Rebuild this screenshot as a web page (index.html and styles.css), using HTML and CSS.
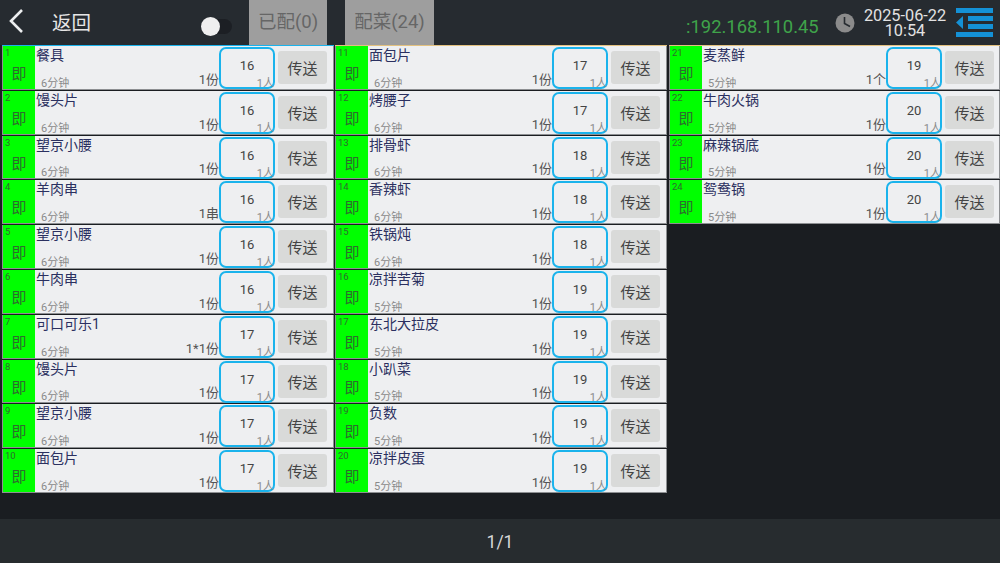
FILE: index.html
```html
<!DOCTYPE html>
<html lang="zh-CN">
<head>
    <meta charset="UTF-8">
    <title>配菜</title>
    <link rel="stylesheet" href="styles.css">
</head>
<body>
    <header class="topbar">
        <svg class="back-icon" width="16" height="26" viewBox="0 0 16 26"><path d="M14 2 L3 13 L14 24" fill="none" stroke="#eceeef" stroke-width="2.6"/></svg>
        <span class="back-text">返回</span>
        <div class="toggle"><span class="toggle-knob"></span></div>
        <div class="tab tab-done">已配(0)</div>
        <div class="tab tab-todo">配菜(24)</div>
        <span class="ip">:192.168.110.45</span>
        <svg class="clock-icon" width="20" height="20" viewBox="0 0 20 20"><circle cx="10" cy="10" r="9.5" fill="#8b8b8b"/><path d="M9.5 4 V10.5 L15 13.5" fill="none" stroke="#262b30" stroke-width="1.6"/></svg>
        <div class="datetime"><div>2025-06-22</div><div>10:54</div></div>
        <svg class="menu-icon" width="37" height="29" viewBox="0 0 37 29"><g fill="#1491d6"><rect x="0" y="0" width="37" height="5"/><rect x="12" y="8" width="25" height="5"/><rect x="12" y="16" width="25" height="5"/><rect x="0" y="24" width="37" height="5"/><path d="M7 8 V21 L0 14.5 Z"/></g></svg>
    </header>

    <main class="board">
        <div class="card first-blue"><div class="tag"><span class="no">1</span><span class="now">即</span></div><div class="info"><div class="name">餐具</div><div class="meta"><span class="mins">6分钟</span><span class="qty">1份</span></div></div><div class="count"><span class="num">16</span><span class="people">1人</span></div><div class="send"><span>传送</span></div></div>
        <div class="card"><div class="tag"><span class="no">2</span><span class="now">即</span></div><div class="info"><div class="name">馒头片</div><div class="meta"><span class="mins">6分钟</span><span class="qty">1份</span></div></div><div class="count"><span class="num">16</span><span class="people">1人</span></div><div class="send"><span>传送</span></div></div>
        <div class="card"><div class="tag"><span class="no">3</span><span class="now">即</span></div><div class="info"><div class="name">望京小腰</div><div class="meta"><span class="mins">6分钟</span><span class="qty">1份</span></div></div><div class="count"><span class="num">16</span><span class="people">1人</span></div><div class="send"><span>传送</span></div></div>
        <div class="card"><div class="tag"><span class="no">4</span><span class="now">即</span></div><div class="info"><div class="name">羊肉串</div><div class="meta"><span class="mins">6分钟</span><span class="qty">1串</span></div></div><div class="count"><span class="num">16</span><span class="people">1人</span></div><div class="send"><span>传送</span></div></div>
        <div class="card"><div class="tag"><span class="no">5</span><span class="now">即</span></div><div class="info"><div class="name">望京小腰</div><div class="meta"><span class="mins">6分钟</span><span class="qty">1份</span></div></div><div class="count"><span class="num">16</span><span class="people">1人</span></div><div class="send"><span>传送</span></div></div>
        <div class="card"><div class="tag"><span class="no">6</span><span class="now">即</span></div><div class="info"><div class="name">牛肉串</div><div class="meta"><span class="mins">6分钟</span><span class="qty">1份</span></div></div><div class="count"><span class="num">16</span><span class="people">1人</span></div><div class="send"><span>传送</span></div></div>
        <div class="card"><div class="tag"><span class="no">7</span><span class="now">即</span></div><div class="info"><div class="name">可口可乐1</div><div class="meta"><span class="mins">6分钟</span><span class="qty">1*1份</span></div></div><div class="count"><span class="num">17</span><span class="people">1人</span></div><div class="send"><span>传送</span></div></div>
        <div class="card"><div class="tag"><span class="no">8</span><span class="now">即</span></div><div class="info"><div class="name">馒头片</div><div class="meta"><span class="mins">6分钟</span><span class="qty">1份</span></div></div><div class="count"><span class="num">17</span><span class="people">1人</span></div><div class="send"><span>传送</span></div></div>
        <div class="card"><div class="tag"><span class="no">9</span><span class="now">即</span></div><div class="info"><div class="name">望京小腰</div><div class="meta"><span class="mins">6分钟</span><span class="qty">1份</span></div></div><div class="count"><span class="num">17</span><span class="people">1人</span></div><div class="send"><span>传送</span></div></div>
        <div class="card"><div class="tag"><span class="no">10</span><span class="now">即</span></div><div class="info"><div class="name">面包片</div><div class="meta"><span class="mins">6分钟</span><span class="qty">1份</span></div></div><div class="count"><span class="num">17</span><span class="people">1人</span></div><div class="send"><span>传送</span></div></div>

        <div class="card mid first-gold"><div class="tag"><span class="no">11</span><span class="now">即</span></div><div class="info"><div class="name">面包片</div><div class="meta"><span class="mins">6分钟</span><span class="qty">1份</span></div></div><div class="count"><span class="num">17</span><span class="people">1人</span></div><div class="send"><span>传送</span></div></div>
        <div class="card mid"><div class="tag"><span class="no">12</span><span class="now">即</span></div><div class="info"><div class="name">烤腰子</div><div class="meta"><span class="mins">6分钟</span><span class="qty">1份</span></div></div><div class="count"><span class="num">17</span><span class="people">1人</span></div><div class="send"><span>传送</span></div></div>
        <div class="card mid"><div class="tag"><span class="no">13</span><span class="now">即</span></div><div class="info"><div class="name">排骨虾</div><div class="meta"><span class="mins">6分钟</span><span class="qty">1份</span></div></div><div class="count"><span class="num">18</span><span class="people">1人</span></div><div class="send"><span>传送</span></div></div>
        <div class="card mid"><div class="tag"><span class="no">14</span><span class="now">即</span></div><div class="info"><div class="name">香辣虾</div><div class="meta"><span class="mins">6分钟</span><span class="qty">1份</span></div></div><div class="count"><span class="num">18</span><span class="people">1人</span></div><div class="send"><span>传送</span></div></div>
        <div class="card mid"><div class="tag"><span class="no">15</span><span class="now">即</span></div><div class="info"><div class="name">铁锅炖</div><div class="meta"><span class="mins">6分钟</span><span class="qty">1份</span></div></div><div class="count"><span class="num">18</span><span class="people">1人</span></div><div class="send"><span>传送</span></div></div>
        <div class="card mid"><div class="tag"><span class="no">16</span><span class="now">即</span></div><div class="info"><div class="name">凉拌苦菊</div><div class="meta"><span class="mins">5分钟</span><span class="qty">1份</span></div></div><div class="count"><span class="num">19</span><span class="people">1人</span></div><div class="send"><span>传送</span></div></div>
        <div class="card mid"><div class="tag"><span class="no">17</span><span class="now">即</span></div><div class="info"><div class="name">东北大拉皮</div><div class="meta"><span class="mins">5分钟</span><span class="qty">1份</span></div></div><div class="count"><span class="num">19</span><span class="people">1人</span></div><div class="send"><span>传送</span></div></div>
        <div class="card mid"><div class="tag"><span class="no">18</span><span class="now">即</span></div><div class="info"><div class="name">小趴菜</div><div class="meta"><span class="mins">5分钟</span><span class="qty">1份</span></div></div><div class="count"><span class="num">19</span><span class="people">1人</span></div><div class="send"><span>传送</span></div></div>
        <div class="card mid"><div class="tag"><span class="no">19</span><span class="now">即</span></div><div class="info"><div class="name">负数</div><div class="meta"><span class="mins">5分钟</span><span class="qty">1份</span></div></div><div class="count"><span class="num">19</span><span class="people">1人</span></div><div class="send"><span>传送</span></div></div>
        <div class="card mid"><div class="tag"><span class="no">20</span><span class="now">即</span></div><div class="info"><div class="name">凉拌皮蛋</div><div class="meta"><span class="mins">5分钟</span><span class="qty">1份</span></div></div><div class="count"><span class="num">19</span><span class="people">1人</span></div><div class="send"><span>传送</span></div></div>

        <div class="card first-gold"><div class="tag"><span class="no">21</span><span class="now">即</span></div><div class="info"><div class="name">麦蒸鲜</div><div class="meta"><span class="mins">5分钟</span><span class="qty">1个</span></div></div><div class="count"><span class="num">19</span><span class="people">1人</span></div><div class="send"><span>传送</span></div></div>
        <div class="card"><div class="tag"><span class="no">22</span><span class="now">即</span></div><div class="info"><div class="name">牛肉火锅</div><div class="meta"><span class="mins">5分钟</span><span class="qty">1份</span></div></div><div class="count"><span class="num">20</span><span class="people">1人</span></div><div class="send"><span>传送</span></div></div>
        <div class="card"><div class="tag"><span class="no">23</span><span class="now">即</span></div><div class="info"><div class="name">麻辣锅底</div><div class="meta"><span class="mins">5分钟</span><span class="qty">1份</span></div></div><div class="count"><span class="num">20</span><span class="people">1人</span></div><div class="send"><span>传送</span></div></div>
        <div class="card"><div class="tag"><span class="no">24</span><span class="now">即</span></div><div class="info"><div class="name">鸳鸯锅</div><div class="meta"><span class="mins">5分钟</span><span class="qty">1份</span></div></div><div class="count"><span class="num">20</span><span class="people">1人</span></div><div class="send"><span>传送</span></div></div>
    </main>

    <footer class="pager">1/1</footer>
</body>
</html>
```

FILE: styles.css
```css
* {
    margin: 0;
    padding: 0;
    box-sizing: border-box;
}

html, body {
    height: 563px;
    overflow: hidden;
}

body {
    font-family: Roboto, "Noto Sans CJK SC", sans-serif;
    background-color: #1a1d21;
    display: flex;
    flex-direction: column;
}

/* Top bar */
.topbar {
    height: 45px;
    background-color: #262b30;
    display: flex;
    align-items: center;
    flex-shrink: 0;
}

.back-icon {
    margin: 0 0 4px 8px;
}

.back-text {
    margin: 0 0 3px 28px;
    width: 149px;
    font-size: 19.5px;
    color: #e6e6e6;
}

.toggle {
    width: 31px;
    height: 15px;
    margin-top: 7px;
    background-color: #1c1f24;
    border-radius: 8px;
    position: relative;
}

.toggle-knob {
    position: absolute;
    left: 0;
    top: -2px;
    width: 19px;
    height: 19px;
    border-radius: 50%;
    background-color: #efefef;
}

.tab {
    height: 45px;
    background-color: #9e9e9e;
    color: #666;
    font-size: 18.5px;
    display: flex;
    align-items: center;
    justify-content: center;
    padding-bottom: 6px;
}

.tab-done {
    width: 78px;
    margin-left: 17px;
}

.tab-todo {
    width: 89px;
    margin-left: 18px;
}

.ip {
    margin-left: 252px;
    margin-top: 7px;
    width: 132px;
    font-size: 18.4px;
    color: #3fa34a;
    white-space: nowrap;
}

.clock-icon {
    margin-left: 17px;
}

.datetime {
    width: 90px;
    margin-left: 5px;
    text-align: center;
    font-size: 16.3px;
    line-height: 15px;
    color: #e2e2e2;
}

.menu-icon {
    margin-left: 6px;
}

/* Board */
.board {
    height: 447px;
    margin: 1px 0 0 2px;
    display: grid;
    grid-template-columns: 332px 333px 331px;
    grid-template-rows: repeat(10, 43.8px);
    grid-auto-flow: column;
    column-gap: 1px;
    row-gap: 1px;
}

.card {
    background-color: #eeeff1;
    border: 1px solid #8d8f92;
    border-top: none;
    display: flex;
    position: relative;
    min-height: 0;
}

.mid {
    margin-right: 1px;
}

.first-blue {
    box-shadow: 0 -1px 0 #1ab3ec;
}

.first-gold {
    box-shadow: 0 -1px 0 #e3c17f;
}

.tag {
    width: 32px;
    background-color: #00ff00;
    color: #2e6b2e;
    display: flex;
    flex-direction: column;
    flex-shrink: 0;
}

.no {
    font-size: 9.5px;
    line-height: 10px;
    padding: 2px 0 0 2px;
}

.now {
    font-size: 15px;
    line-height: 20px;
    margin-top: 6px;
    text-align: center;
}

.info {
    width: 184px;
    flex-shrink: 0;
    padding-left: 1px;
    display: flex;
    flex-direction: column;
    justify-content: space-between;
}

.name {
    font-size: 14px;
    line-height: 18px;
    color: #2b3060;
}

.meta {
    display: flex;
    justify-content: space-between;
    align-items: flex-end;
    padding: 0 0 0 5px;
}

.mins {
    font-size: 11px;
    line-height: 14px;
    margin-bottom: -2px;
    color: #8a8a8a;
}

.qty {
    font-size: 13px;
    line-height: 18px;
    color: #555;
}

.count {
    width: 56px;
    height: 42px;
    margin-top: 1px;
    flex-shrink: 0;
    border: 2px solid #1ab3ec;
    border-radius: 7px;
    position: relative;
    display: flex;
    justify-content: center;
    padding-top: 8px;
    font-size: 13px;
    color: #444;
}

.num {
    line-height: 18px;
}

.people {
    position: absolute;
    right: -1px;
    bottom: -3px;
    font-size: 11px;
    line-height: 13px;
    color: #8a8a8a;
}

.send {
    width: 49px;
    height: 33px;
    margin: 5px 0 0 3px;
    background-color: #d9dad9;
    border-radius: 3px;
    display: flex;
    align-items: center;
    justify-content: center;
    font-size: 15px;
    color: #444;
}

/* Footer */
.pager {
    margin-top: 26px;
    flex-grow: 1;
    background-color: #272c2f;
    color: #d8d8d8;
    font-size: 17.5px;
    text-align: center;
    padding-top: 13px;
}
```
